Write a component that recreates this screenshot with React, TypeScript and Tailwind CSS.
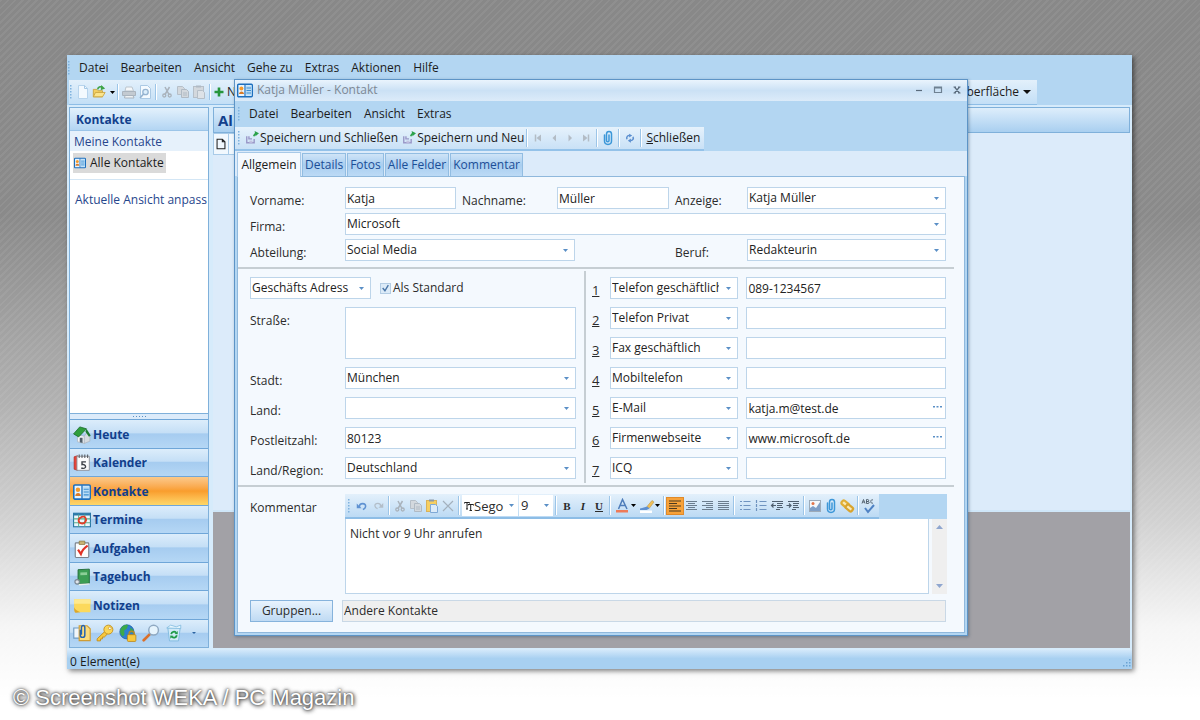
import React from "react";

type Kids = { children?: React.ReactNode };

function Icon({ children, className = "size-4" }: Kids & { className?: string }) {
  return (
    <svg viewBox="0 0 16 16" className={`${className} shrink-0`} fill="none" aria-hidden="true">
      {children}
    </svg>
  );
}

function Grip() {
  return (
    <svg viewBox="0 0 4 16" className="h-4 w-1 shrink-0" aria-hidden="true">
      {[1, 4, 7, 10, 13].map((y) => (
        <rect key={y} x="1" y={y} width="1.500" height="1.500" fill="#7fb2de" />
      ))}
    </svg>
  );
}

function Sep() {
  return (
    <span className="flex w-1.5 shrink-0 justify-center self-stretch py-0.5">
      <span className="w-px bg-[#9cc5e8]" />
      <span className="w-px bg-white" />
    </span>
  );
}

function Tool({ label, children, active = false, wide = false }: Kids & { label: string; active?: boolean; wide?: boolean }) {
  return (
    <button
      type="button"
      aria-label={label}
      className={`flex h-4 shrink-0 items-center justify-center ${wide ? "w-6" : "w-4"} ${
        active ? "bg-[#f7a23a] outline outline-[#e08a2a]" : ""
      }`}
    >
      {children}
    </button>
  );
}

const Caret = ({ className = "h-[3px] w-[5px] text-black" }: { className?: string }) => (
  <svg viewBox="0 0 6 4" preserveAspectRatio="none" className={`shrink-0 ${className}`} aria-hidden="true">
    <path d="M0 0h6L3 4z" fill="currentColor" />
  </svg>
);

const fieldCaret = "h-[3px] w-[5px] text-[#5a8fc6]";

const CardIcon = ({ className }: { className?: string }) => (
  <Icon className={className}>
    <rect x=".7" y="1.7" width="14.6" height="12.6" rx="1" fill="#e8f5ff" stroke="#1c6fbe" strokeWidth="1.4" />
    <path d="M8 2v12" stroke="#1c6fbe" strokeWidth="1.2" />
    <rect x="9" y="3" width="5.5" height="10" fill="#b8dcf6" />
    <path d="M9.5 5.5h4.500M9.500 8h4.500M9.500 10.500h4.500" stroke="#3f8fd0" />
    <circle cx="4.400" cy="6" r="2" fill="#f49a2c" />
    <path d="M2 11.500c0-3.500 5-3.500 5 0z" fill="#d97b28" />
  </Icon>
);

const CutIcon = () => (
  <Icon>
    <path d="M6 3l4 7.500M10.500 3L6 10.500" stroke="#a9b2bb" strokeWidth="1.500" />
    <circle cx="5.300" cy="11.500" r="1.500" stroke="#a9b2bb" strokeWidth="1.300" />
    <circle cx="10.700" cy="11.500" r="1.500" stroke="#a9b2bb" strokeWidth="1.300" />
  </Icon>
);

const CopyIcon = () => (
  <Icon>
    <path d="M2.500 2.500h5l2 2v6h-7z" fill="#d3d8dd" stroke="#b6bfc8" />
    <path d="M6.500 5.500h5l2 2v6h-7z" fill="#d3d8dd" stroke="#b0bac4" />
    <path d="M8 9h4M8 11h4" stroke="#b0bac4" />
  </Icon>
);

const PasteIcon = ({ color = false }: { color?: boolean }) => (
  <Icon>
    <rect x="2.500" y="2.500" width="10" height="11" fill={color ? "#f6cf62" : "#d3d8dd"} stroke={color ? "#d9b25a" : "#b6bfc8"} />
    <path d="M5 1.500h5v2H5z" fill={color ? "#8d99a6" : "#b0bac4"} />
    <path d="M6.500 6.500h5l2 2v6h-7z" fill={color ? "#dcebf9" : "#dde2e7"} stroke={color ? "#7fa9d6" : "#b6bfc8"} />
  </Icon>
);

const SaveIcon = () => (
  <Icon className="h-4 w-[14px]">
    <path d="M2 6v7.500h8.500V9M4.500 6v3h3.500" stroke="#9a98c8" strokeWidth="1.600" />
    <path d="M5 11h3.500v2.500H5z" fill="#c3c2e0" />
    <path d="M10 6c.5-2 1.500-2.800 2.500-3" stroke="#2aa24a" strokeWidth="1.800" />
    <path d="M11 0l5 2.600L12 6z" fill="#2aa24a" />
  </Icon>
);

const ClipIcon = () => (
  <Icon>
    <path
      d="M4.500 5v6c0 4.500 7 4.500 7 0V4c0-3.500-5-3.500-5 0v6.500c0 1.800 2.500 1.800 2.500 0V5"
      stroke="#3c97d8"
      strokeWidth="1.500"
      strokeLinecap="round"
    />
  </Icon>
);

const DocIcon = () => (
  <Icon>
    <path d="M3.500 1.500h6l3 3v10h-9z" fill="#f3f9fe" stroke="#b7d4ed" />
    <path d="M9.500 1.500v3h3" stroke="#a4c8e6" />
  </Icon>
);

const FolderIcon = () => (
  <Icon className="size-3.5">
    <path d="M1.500 5h4l1.500 1.500h5v7H1.500z" fill="#f3cf62" stroke="#c9a340" />
    <path d="M1.500 13.500L4 8.500h11l-3 5z" fill="#fbe48c" stroke="#c9a340" />
    <path d="M6.500 5c.5-3 3-3.500 5-2.500" stroke="#3fa447" strokeWidth="1.800" />
    <path d="M10.500 0l4.500 4-5 2z" fill="#3fa447" />
  </Icon>
);

const PrintIcon = () => (
  <Icon>
    <path d="M4 7l1-4h6l1.500 4z" fill="#f5f7f9" stroke="#bcc5cd" />
    <path d="M1.500 7.500h13v4h-13z" fill="#c3cad1" stroke="#aab4be" />
    <path d="M4 11.500h8l1 2.500H3.500z" fill="#eef1f3" stroke="#aab4be" />
  </Icon>
);

const PreviewIcon = () => (
  <Icon>
    <path d="M3.500 1.500h7l3 3v10h-10z" fill="#f4faff" stroke="#abc9e4" />
    <circle cx="8.500" cy="8" r="2.700" fill="#dceefb" stroke="#95b3d0" strokeWidth="1.300" />
    <path d="M6.500 10L3 14" stroke="#95b3d0" strokeWidth="1.600" />
  </Icon>
);

const HouseIcon = () => (
  <Icon className="size-[18px]">
    <path d="M4 8v6l6 1.500V9z" fill="#f4f6f8" stroke="#a9b2ba" strokeWidth=".6" />
    <path d="M10 9l3-4 2 3.500v5L10 15.500z" fill="#d5dbe0" stroke="#a9b2ba" strokeWidth=".6" />
    <path d="M.5 7L6 .8l6 1.700-7 7.200z" fill="#2f9e3c" stroke="#17692a" strokeWidth=".7" />
    <path d="M12 2.500l3.700 6-1.500 1L11 5z" fill="#1d7a30" />
    <path d="M6 10.500h2.500v4.600L6 14.500z" fill="#51606c" />
  </Icon>
);

const CalendarIcon = () => (
  <Icon className="size-[18px]">
    <path d="M1 2.500l3-1v13l-3-1z" fill="#e8443a" stroke="#a82820" strokeWidth=".6" />
    <path d="M3.500 2h11v12.500h-11z" fill="#fbfbfc" stroke="#8b8f96" strokeWidth=".8" />
    <path d="M5.500.5v3M8 .5v3M10.500.5v3M13 .5v3" stroke="#52565c" strokeWidth=".9" />
    <path d="M11.500 7H8v2.500c3.500-1 4.500 3.300 1 3.300-.8 0-1.200-.2-1.600-.6" stroke="#3b3f46" strokeWidth="1.200" />
  </Icon>
);

const TermineIcon = () => (
  <Icon className="size-[18px]">
    <rect x=".5" y="2" width="15" height="12" fill="#eaf6fb" stroke="#2a78a8" />
    <path d="M.5 3h15" stroke="#2a78a8" strokeWidth="2" />
    <path d="M.5 7h15M.5 10.500h15M5 3v11M10.500 3v11" stroke="#5cae8b" strokeWidth=".9" />
    <path d="M7 5.500c4-1.500 5.500 1.500 4 4-1.500 2.500-6 2-6-1 0-1.500 1-2.500 2.500-2.800" stroke="#e23c28" strokeWidth="1.600" />
  </Icon>
);

const TaskIcon = () => (
  <Icon className="size-[18px]">
    <rect x="2" y="2.500" width="12" height="13" rx=".8" fill="#fbfcfd" stroke="#7a828c" />
    <path d="M5.500 1h5v3h-5z" fill="#c8b372" stroke="#877338" strokeWidth=".6" />
    <path d="M4.500 8.500L7 12.500c1-3 3-5.500 6-7.500" stroke="#e03226" strokeWidth="1.900" />
  </Icon>
);

const DiaryIcon = () => (
  <Icon className="size-[18px]">
    <path d="M4.500 1.500L14.500 1v12.500l-10 .8z" fill="#3c9e54" stroke="#1d6833" strokeWidth=".8" />
    <path d="M6.500 4l6-.3v2.500l-6 .3z" fill="#8ccf97" />
    <path d="M4.500 14.300l10-.8v1.200l-9 .9z" fill="#e9efe9" />
    <circle cx="3.700" cy="12.300" r="2" fill="#dfe5ea" stroke="#7c8894" />
  </Icon>
);

const NoteIcon = () => (
  <Icon className="size-[18px]">
    <path d="M1 2h14.500v11.500H5.500C3.500 12.500 1.500 12 1 9z" fill="#fcd95c" />
    <path d="M1 2h14.500v4H1z" fill="#fee98f" />
    <path d="M1 9c1 2.500 3 3 5.500 4.500L3 14c-2 0-2-2.500-2-5z" fill="#dda82a" />
  </Icon>
);

const footIcons: { label: string; art: React.ReactNode }[] = [
  {
    label: "Ordner",
    art: (
      <>
        <path d="M.7 3.500h7v9h-7z" fill="#f0f6fb" stroke="#6d9ac3" />
        <path d="M5.500 1.500h7l2.800 2.800v10.500H5.500z" fill="#fbdc7c" stroke="#cf9d35" />
        <path d="M6.500 5v5c0 2.500 4 2.500 4 0V3c0-2.200-3-2.200-3 0v6.500" stroke="#2563b0" strokeWidth="1.300" />
      </>
    ),
  },
  {
    label: "Passwörter",
    art: (
      <>
        <path d="M8.500 6L1 13.200V15h3v-1.700h1.700v-1.700h1.700L10 9z" fill="#f7c83f" stroke="#c18d1d" strokeWidth=".8" />
        <circle cx="11" cy="5" r="4" fill="#fbd655" stroke="#c18d1d" strokeWidth=".8" />
        <circle cx="12.300" cy="3.800" r="1.200" fill="#fff" stroke="#c18d1d" strokeWidth=".6" />
      </>
    ),
  },
  {
    label: "Web",
    art: (
      <>
        <circle cx="7" cy="7" r="6.300" fill="#2d7fd0" stroke="#1b5a9e" strokeWidth=".6" />
        <path d="M2 3.500c2-3 5-3 6-2.500L7 4 4.500 6 5 9l-1.500 2C.5 9 .5 5.500 2 3.500zM10 3l3 2.500V8l-3-1z" fill="#3ba94a" />
        <path d="M9 10V8.500c0-2.800 4.500-2.800 4.500 0V10" stroke="#b3872a" strokeWidth="1.300" />
        <rect x="7.500" y="9.500" width="7.500" height="6" rx=".8" fill="#f8c93e" stroke="#b98416" strokeWidth=".7" />
      </>
    ),
  },
  {
    label: "Suchen",
    art: (
      <>
        <path d="M7 9l-5.500 5.500" stroke="#d9702c" strokeWidth="2.400" strokeLinecap="round" />
        <circle cx="10.300" cy="5.500" r="4.300" fill="#e6f4fd" stroke="#8fa9c2" strokeWidth="1.300" />
      </>
    ),
  },
  {
    label: "Papierkorb",
    art: (
      <>
        <path d="M2.500 3.500h11L12 15H4z" fill="#cfe9f8" stroke="#7db9de" strokeWidth=".8" />
        <path d="M1.500 3.500L5 1l5 1.500L14 1v3z" fill="#e9f7fe" stroke="#7db9de" strokeWidth=".7" />
        <path d="M5.500 9c.5-2.300 3-2.800 4.300-1.300M10.500 10c-.5 2.300-3 2.800-4.300 1.300" stroke="#1f9a48" strokeWidth="1.600" />
        <path d="M8.500 8.800l2.800.3V6.300zM7.500 10.500l-2.800-.3V13z" fill="#1f9a48" />
      </>
    ),
  },
];

const navItems = [
  { name: "Heute", icon: <HouseIcon /> },
  { name: "Kalender", icon: <CalendarIcon /> },
  { name: "Kontakte", icon: <CardIcon className="size-[18px]" />, active: true },
  { name: "Termine", icon: <TermineIcon /> },
  { name: "Aufgaben", icon: <TaskIcon /> },
  { name: "Tagebuch", icon: <DiaryIcon /> },
  { name: "Notizen", icon: <NoteIcon /> },
];

const fieldBox = "h-[22px] w-full min-w-0 rounded-none border border-[#bdd5ea] bg-white text-[#222]";

function TextField({ id, label, value = "" }: { id: string; label?: string; value?: string }) {
  return <input id={id} aria-label={label} defaultValue={value} className={`${fieldBox} px-px`} />;
}

function Choice({ id, label, value, className = "" }: { id: string; label?: string; value: string; className?: string }) {
  return (
    <div className={`relative min-w-0 ${className}`}>
      <select id={id} aria-label={label} defaultValue={value} className={`${fieldBox} block appearance-none pr-[18px] pl-px`}>
        <option>{value}</option>
      </select>
      <span className="pointer-events-none absolute top-[10px] right-[7px]">
        <Caret className={fieldCaret} />
      </span>
    </div>
  );
}

function Label({ htmlFor, children }: Kids & { htmlFor: string }) {
  return (
    <label htmlFor={htmlFor} className="block h-[22px] pt-[3px] leading-[22px] whitespace-nowrap">
      {children}
    </label>
  );
}

const phones = [
  { kind: "Telefon geschäftlich", value: "089-1234567" },
  { kind: "Telefon Privat", value: "" },
  { kind: "Fax geschäftlich", value: "" },
  { kind: "Mobiltelefon", value: "" },
  { kind: "E-Mail", value: "katja.m@test.de", more: true },
  { kind: "Firmenwebseite", value: "www.microsoft.de", more: true },
  { kind: "ICQ", value: "" },
];

const lines = (d: string, color = "#6b7c8d") => (
  <Icon>
    <path d={d} stroke={color} strokeWidth="1.200" />
  </Icon>
);

function EditorToolbar() {
  return (
    <div className="flex h-[25px] bg-[#b3d6f2]">
      <div className="flex items-center border-b-2 border-[#8dbde6] bg-linear-to-b from-[#e3f0fb] to-[#bcdaf4] pr-0.5 pl-0.5">
        <Grip />
        <span className="w-[3px]" />
        <Tool label="Rückgängig">
          <Icon className="size-3.5">
            <path d="M5 9c0-5 8-5 7 0-.3 1.500-1.500 2.500-3 3" stroke="#5f92d2" strokeWidth="1.800" />
            <path d="M2 5v5.500h5.500z" fill="#5f92d2" />
          </Icon>
        </Tool>
        <Tool label="Wiederholen">
          <Icon className="size-3.5">
            <path d="M11 8c0-4-7-4-6.500 0 .2 1.500 1.500 2.500 3 3" stroke="#b3bec9" strokeWidth="1.500" />
            <path d="M14 4.500V10H8.500z" fill="#b3bec9" />
          </Icon>
        </Tool>
        <Sep />
        <Tool label="Ausschneiden"><CutIcon /></Tool>
        <Tool label="Kopieren"><CopyIcon /></Tool>
        <Tool label="Einfügen"><PasteIcon color /></Tool>
        <Tool label="Löschen">{lines("M3 3l10 10M13 3L3 13", "#a3b0bd")}</Tool>
        <Sep />
        <div className="relative flex h-[21px] w-14 items-center bg-white">
          <svg viewBox="0 0 10 10" className="ml-0.5 size-2.5 shrink-0" aria-hidden="true">
            <path d="M.5 2.500v-1h5v1M3 1.500V8M2 8h2M4 4.500V3.500h5.500v1M6.700 3.500V9.500M5.500 9.500H8" stroke="#222" fill="none" />
          </svg>
          <select aria-label="Schriftart" className="w-full min-w-0 appearance-none rounded-none pr-3 text-[13px]">
            <option>Sego</option>
          </select>
          <span className="pointer-events-none absolute top-[9px] right-1"><Caret className={fieldCaret} /></span>
        </div>
        <div className="relative ml-px h-[21px] w-[34px] bg-white">
          <select aria-label="Schriftgröße" className="w-full appearance-none rounded-none pl-0.5 text-[13px]">
            <option>9</option>
          </select>
          <span className="pointer-events-none absolute top-[9px] right-1"><Caret className={fieldCaret} /></span>
        </div>
        <Sep />
        <Tool label="Fett"><b className="font-['Liberation_Serif',serif] text-[11px]">B</b></Tool>
        <Tool label="Kursiv"><i className="font-['Liberation_Serif',serif] text-[11px] font-bold">I</i></Tool>
        <Tool label="Unterstrichen"><u className="font-['Liberation_Serif',serif] text-[11px] font-bold">U</u></Tool>
        <Sep />
        <Tool label="Schriftfarbe" wide>
          <Icon>
            <path d="M3.500 11L7.500 1.500 12 11M5 7.500h5.500" stroke="#4f7dba" strokeWidth="1.500" />
            <rect x="1" y="12" width="12" height="2.500" fill="#ee7a58" />
          </Icon>
          <Caret />
        </Tool>
        <Tool label="Hervorheben" wide>
          <Icon>
            <path d="M8 8.500l5-6 2 1.500-4.500 6z" fill="#f0bf55" stroke="#b99552" strokeWidth=".6" />
            <path d="M1 10.500c3-1 5-1 7-2l2.500 2-3 1.500H1z" fill="#5d8fd0" />
            <rect x="1" y="12.500" width="12" height="2.500" fill="#fff" />
          </Icon>
          <Caret />
        </Tool>
        <Sep />
        <Tool label="Linksbündig" active>{lines("M2 3h12M2 5.500h8M2 8h12M2 10.500h8M2 13h12", "#4b3a20")}</Tool>
        <Tool label="Zentriert">{lines("M3 3.500h11M5 5.500h7M3 7.500h11M5 9.500h7M3 11.500h11")}</Tool>
        <Tool label="Rechtsbündig">{lines("M3 3.500h11M7 5.500h7M3 7.500h11M7 9.500h7M3 11.500h11")}</Tool>
        <Tool label="Blocksatz">{lines("M3 3.500h11M3 5.500h11M3 7.500h11M3 9.500h11M3 11.500h11")}</Tool>
        <Sep />
        <Tool label="Aufzählung">{lines("M3 3.500h2M6.500 3.500h7M3 7.500h2M6.500 7.500h7M3 11.500h2M6.500 11.500h7", "#6f93bf")}</Tool>
        <Tool label="Nummerierung">{lines("M3.500 2v3M6.500 3.500h7M3.500 6v3M6.500 7.500h7M3.500 10v3M6.500 11.500h7", "#6f93bf")}</Tool>
        <Tool label="Einzug verkleinern">{lines("M3 3.500h11M8 5.500h6M8 7.500h5M8 9.500h6M7 11.500h4M7 7.500H2M4.500 5.500L2.500 7.500l2 2", "#4f5f70")}</Tool>
        <Tool label="Einzug vergrößern">{lines("M3 3.500h11M8 5.500h6M8 7.500h5M8 9.500h6M7 11.500h4M1.500 7.500h5M4 5.500l2 2-2 2", "#4f5f70")}</Tool>
        <Sep />
        <Tool label="Bild">
          <Icon>
            <rect x="2.500" y="2.500" width="11" height="11" fill="#f5f9fc" stroke="#9daab8" />
            <path d="M3 13V10l3-2 3 2 4-6v9z" fill="#7f9fc6" />
            <circle cx="6" cy="5.500" r="1.500" fill="#e3744a" />
          </Icon>
        </Tool>
        <Tool label="Anlage"><ClipIcon /></Tool>
        <Tool label="Verknüpfung">
          <Icon>
            <rect x="2" y="3" width="7.500" height="4.500" rx="1.500" transform="rotate(40 5 6)" stroke="#e0ae36" strokeWidth="2.200" fill="#fae9b4" />
            <rect x="6.500" y="7.500" width="7.500" height="4.500" rx="1.500" transform="rotate(40 10 10)" stroke="#d9a42e" strokeWidth="2.200" fill="#fae9b4" />
          </Icon>
        </Tool>
        <Sep />
        <Tool label="Rechtschreibung">
          <Icon>
            <path d="M1 5.500L2.500 1.500 4 5.500M1.500 4h2M5.500 1.500v4h1.500c1.500 0 1.500-2 0-2H5.500h1.300c1.200 0 1.200-2 0-2zM12 2c-3-1.500-3 4.500 0 3" stroke="#4c5a68" strokeWidth=".9" />
            <path d="M4 10l3 4 6-7" stroke="#4f82c4" strokeWidth="2" />
          </Icon>
        </Tool>
      </div>
    </div>
  );
}

const tabs = ["Details", "Fotos", "Alle Felder", "Kommentar"];

function ContactDialog() {
  return (
    <section
      aria-label="Katja Müller - Kontakt"
      className="absolute top-[24px] right-[164px] left-[167px] flex flex-col border border-[#5d94c6] bg-[#b3d6f2] shadow-[1px_1px_3px_rgba(30,60,90,0.4)]"
    >
      <header className="flex h-[21px] items-center gap-1 bg-linear-to-b from-[#eaf4fd] via-[#cbe1f5] to-[#dcebf9] pr-0.5 pl-0.5">
        <CardIcon className="h-[17px] w-4" />
        <h1 className="flex-1 pb-0.5 text-[#7d8894]">Katja Müller - Kontakt</h1>
        <div className="flex gap-[3px] pb-0.5">
          <Tool label="Minimieren">{lines("M5 8.500h6", "#5a6b7c")}</Tool>
          <Tool label="Maximieren">{lines("M4.500 5h7M4.500 6h7M4.500 4.500v6h7v-6", "#6f8192")}</Tool>
          <Tool label="Fenster schließen">{lines("M5.500 5l5 6M10.500 5l-5 6M4.500 5h2.500M9 5h2.500M4.500 11h2.500M9 11h2.500", "#5a6b7c")}</Tool>
        </div>
      </header>

      <nav aria-label="Kontaktmenü" className="flex h-[26px] items-center gap-3 pl-0.5">
        <span className="-mr-1"><Grip /></span>
        {["Datei", "Bearbeiten", "Ansicht", "Extras"].map((m) => (
          <button key={m} type="button">{m}</button>
        ))}
      </nav>

      <div className="flex h-6">
        <div className="flex items-center border-b-2 border-[#94c2e9] bg-linear-to-b from-[#e6f2fc] to-[#c9e1f6] pr-1 pl-0.5 whitespace-nowrap">
          <Grip />
          <button type="button" className="ml-1 flex items-center gap-px"><SaveIcon />Speichern und Schließen</button>
          <button type="button" className="ml-1 flex items-center gap-px"><SaveIcon />Speichern und Neu</button>
          <Sep />
          <Tool label="Erster">
            <Icon><path d="M5.500 4.500v7" stroke="#b3bcc5" strokeWidth="1.500" /><path d="M11 4.500v7L6.500 8z" fill="#b3bcc5" /></Icon>
          </Tool>
          <Tool label="Vorheriger"><Icon><path d="M10 4.500v7L6.500 8z" fill="#b3bcc5" /></Icon></Tool>
          <Tool label="Nächster"><Icon><path d="M6.500 4.500v7L10 8z" fill="#b3bcc5" /></Icon></Tool>
          <Tool label="Letzter">
            <Icon><path d="M10.500 4.500v7" stroke="#b3bcc5" strokeWidth="1.500" /><path d="M5 4.500v7L9.500 8z" fill="#b3bcc5" /></Icon>
          </Tool>
          <Sep />
          <Tool label="Anlage"><ClipIcon /></Tool>
          <Sep />
          <Tool label="Aktualisieren">
            <Icon className="size-3.5">
              <path d="M4.500 9.500c-1-3 1-4.500 3-4.500M11.500 6.500c1 3-1 4.500-3 4.500" stroke="#5a8ecf" strokeWidth="1.700" />
              <path d="M7 3l3.500 2L7 7.500zM9 8.500v5L5.500 11z" fill="#5a8ecf" />
            </Icon>
          </Tool>
          <Sep />
          <button type="button" className="ml-0.5"><u>S</u>chließen</button>
        </div>
      </div>

      <div role="tablist" className="flex h-[25px] items-end bg-[#dcebfa] pl-0.5">
        <button type="button" role="tab" aria-selected="true" className="z-10 -mb-px h-[25px] w-16 border border-b-0 border-[#a7c9e8] bg-[#f4f9fe]">
          Allgemein
        </button>
        {tabs.map((t) => (
          <button
            key={t}
            type="button"
            role="tab"
            aria-selected="false"
            className="ml-px h-[23px] border border-b-0 border-[#92bde2] bg-linear-to-b from-[#cfe4f7] via-[#a9cef0] to-[#bcdaf5] px-0.5 text-[#1c4e97]"
          >
            {t}
          </button>
        ))}
      </div>

      <form className="mx-0.5 mb-0.5 border border-[#8fb8dc] bg-[#f4f9fe] pt-2.5 pb-2.5 text-[#2b2b2b]" onSubmit={(e) => e.preventDefault()}>
        <div className="mr-[18px] ml-3 grid grid-cols-[95px_111fr_101px_112fr_78px_199fr] gap-y-1">
          <Label htmlFor="vorname">Vorname:</Label>
          <TextField id="vorname" value="Katja" />
          <div className="pl-1.5"><Label htmlFor="nachname">Nachname:</Label></div>
          <TextField id="nachname" value="Müller" />
          <div className="pl-1.5"><Label htmlFor="anzeige">Anzeige:</Label></div>
          <Choice id="anzeige" value="Katja Müller" />
          <Label htmlFor="firma">Firma:</Label>
          <Choice id="firma" value="Microsoft" className="col-span-5" />
          <Label htmlFor="abteilung">Abteilung:</Label>
          <div className="col-span-3"><Choice id="abteilung" value="Social Media" className="w-[71%]" /></div>
          <div className="pl-1.5"><Label htmlFor="beruf">Beruf:</Label></div>
          <Choice id="beruf" value="Redakteurin" />
        </div>

        <hr className="mt-1.5 mr-2.5 border-t-2 border-[#c6ced3]" />

        <div className="mt-0.5 mr-[18px] ml-3 flex">
          <div className="grid min-w-0 flex-[326] auto-rows-[22px] grid-cols-[95px_1fr] gap-y-2 pt-1.5 pb-1">
            <div className="col-span-2 flex items-center">
              <Choice id="adressart" label="Adressart" value="Geschäfts Adress" className="w-[121px]" />
              <label className="ml-2.5 flex items-center gap-[3px]">
                <input type="checkbox" defaultChecked className="peer sr-only" />
                <Icon className="size-[9px] bg-[#dcebf8] outline outline-[#b4cde4]">
                  <path d="M3 7l4 5 6-10" stroke="#4a76a8" strokeWidth="2.500" />
                </Icon>
                Als Standard
              </label>
            </div>
            <div className="row-span-2"><Label htmlFor="strasse">Straße:</Label></div>
            <textarea id="strasse" className="row-span-2 w-full resize-none border border-[#bdd5ea] bg-white" />
            <Label htmlFor="stadt">Stadt:</Label>
            <Choice id="stadt" value="München" />
            <Label htmlFor="land">Land:</Label>
            <Choice id="land" value="" />
            <Label htmlFor="plz">Postleitzahl:</Label>
            <TextField id="plz" value="80123" />
            <Label htmlFor="region">Land/Region:</Label>
            <Choice id="region" value="Deutschland" />
          </div>
          <div className="mr-1.5 ml-2 w-0.5 bg-[#c6ced3]" />
          <ul className="flex min-w-0 flex-[354] flex-col gap-2 pt-1.5">
            {phones.map((p, i) => (
              <li key={p.kind} className="grid h-[22px] grid-cols-[18px_128fr_207fr]">
                <label htmlFor={`nummer${i}`} className="block h-[22px] pt-0.5 text-[13px] leading-[22px] underline">{i + 1}</label>
                <Choice id={`art${i}`} label={`Art ${i + 1}`} value={p.kind} />
                <div className="relative ml-2">
                  <TextField id={`nummer${i}`} value={p.value} />
                  {p.more && (
                    <button type="button" aria-label="Öffnen" className="absolute top-[5px] right-1">
                      <svg viewBox="0 0 9 9" className="size-[9px]" aria-hidden="true">
                        <path d="M0 4h2v1.500H0zM3.500 4h2v1.500h-2zM7 4h2v1.500H7z" fill="#5a8fc6" />
                      </svg>
                    </button>
                  )}
                </div>
              </li>
            ))}
          </ul>
        </div>

        <hr className="mt-0.5 mr-2.5 border-t-2 border-[#c6ced3]" />

        <div className="mt-[7px] mr-[17px] ml-3 flex">
          <div className="w-[95px] shrink-0"><Label htmlFor="kommentar">Kommentar</Label></div>
          <div className="min-w-0 flex-1">
            <EditorToolbar />
            <div className="flex h-[75px]">
              <textarea
                id="kommentar"
                defaultValue="Nicht vor 9 Uhr anrufen"
                className="min-w-0 flex-1 resize-none border border-t-0 border-[#bdd5ea] bg-white px-1 pt-[5px]"
              />
              <div className="ml-[3px] flex w-[15px] flex-col items-center justify-between bg-[#efefef] py-1.5">
                <Caret className="h-1 w-[7px] rotate-180 text-[#8fa6cf]" />
                <Caret className="h-1 w-[7px] text-[#8fa6cf]" />
              </div>
            </div>
          </div>
        </div>

        <div className="mt-1.5 mr-[18px] ml-3 flex gap-[9px]">
          <button type="button" className="h-[22px] w-[83px] shrink-0 border border-[#86b3dc] bg-linear-to-b from-[#e8f3fd] via-[#d4e7f8] to-[#bfdaf3]">
            Gruppen...
          </button>
          <input aria-label="Gruppen" readOnly defaultValue="Andere Kontakte" className="h-[22px] min-w-0 flex-1 border border-[#c9d8e6] bg-[#efefef] pb-0.5 pl-px" />
        </div>
      </form>
    </section>
  );
}

export default function App() {
  return (
    <div className="relative flex min-h-screen flex-col bg-[linear-gradient(rgba(255,255,255,0)_0%,rgba(255,255,255,0.02)_30%,rgba(255,255,255,0.35)_56%,rgba(255,255,255,0.61)_72%,rgba(255,255,255,0.92)_87%,#fff_97%),repeating-linear-gradient(135deg,#8f8f8f_0_2px,#888_2px_5px)] pt-[55px] pr-[68px] pb-2 pl-[67px] font-['Open_Sans','Noto_Sans',sans-serif] text-xs leading-5 text-[#1c1c1c]">
      <main className="relative flex min-h-[614px] flex-1 flex-col bg-[#b3d6f2] shadow-[2px_2px_5px_rgba(0,0,0,0.5)]">
        <nav aria-label="Hauptmenü" className="flex h-[25px] items-center gap-3">
          <span className="-mr-1"><Grip /></span>
          {["Datei", "Bearbeiten", "Ansicht", "Gehe zu", "Extras", "Aktionen", "Hilfe"].map((m) => (
            <button key={m} type="button">{m}</button>
          ))}
        </nav>

        <div className="mr-[95px] ml-0.5 flex h-[25px] items-center justify-between border-b border-[#8dbde6] bg-linear-to-b from-[#e3f0fb] to-[#c3dff6]">
          <div className="flex items-center">
            <Grip />
            <span className="w-0.5" />
            <Tool label="Neu"><DocIcon /></Tool>
            <Tool label="Öffnen" wide><FolderIcon /><span className="w-1" /><Caret /></Tool>
            <Sep />
            <Tool label="Drucken"><PrintIcon /></Tool>
            <Tool label="Seitenansicht"><PreviewIcon /></Tool>
            <Sep />
            <Tool label="Ausschneiden"><CutIcon /></Tool>
            <Tool label="Kopieren"><CopyIcon /></Tool>
            <Tool label="Einfügen"><PasteIcon /></Tool>
            <Sep />
            <button type="button" className="flex items-center gap-0.5">
              <Icon className="size-3"><path d="M8 2v12M2 8h12" stroke="#27963c" strokeWidth="3.500" /></Icon>
              <span>Neu</span>
            </button>
          </div>
          <button type="button" className="flex items-center gap-1 pr-1.5">
            Oberfläche
            <Caret className="h-1 w-2 text-[#111]" />
          </button>
        </div>

        <div className="flex flex-1 gap-1 border-x-2 border-[#d6ebfb] bg-[#d6ebfb] pt-0.5 pb-0.5">
          <aside className="flex w-[140px] shrink-0 flex-col border border-[#7fb0da] bg-white">
            <h2 className="h-[22px] bg-linear-to-b from-[#e3f1fc] to-[#b3d5f3] pl-1.5 leading-6 font-bold text-[#123f8c]">Kontakte</h2>
            <p className="h-[21px] border-t border-[#9cc5e8] bg-[#e6f1fb] pl-1 leading-[21px] text-[#26468c]">Meine Kontakte</p>
            <div className="mt-0.5 flex pl-[3px]">
              <a href="#alle" className="flex items-center gap-1 bg-[#dadada] pr-0.5 pl-px">
                <CardIcon className="size-3" />
                Alle Kontakte
              </a>
            </div>
            <hr className="mt-1.5 border-[#d3e6f5]" />
            <a href="#ansicht" className="mt-2.5 pl-[5px] whitespace-nowrap text-[#26468c]">Aktuelle Ansicht anpass</a>
            <div className="flex-1" />
            <div className="flex h-1.5 items-center justify-center gap-0.5 border-t border-[#7fb0da] bg-[#dcebfa]">
              {[0, 1, 2, 3, 4].map((i) => <span key={i} className="size-px bg-[#5c90c4]" />)}
            </div>
            <nav aria-label="Bereiche" className="grid h-[228px] grid-rows-8">
              {navItems.map((n) => (
                <button
                  key={n.name}
                  type="button"
                  className={`flex items-center gap-0.5 border-t border-[#6fa6d8] pt-0.5 pl-[3px] font-bold text-[#123f8c] ${
                    n.active
                      ? "bg-linear-to-b from-[#fbc98a] via-[#f99d2c] via-50% to-[#fdd768]"
                      : "bg-[linear-gradient(#dcedfb_0%,#c5dff6_45%,#a6ccf0_50%,#b5d7f5_100%)]"
                  }`}
                >
                  {n.icon}
                  {n.name}
                </button>
              ))}
              <div className="flex items-center gap-[5px] border-t border-[#6fa6d8] bg-[linear-gradient(#dcedfb_0%,#c5dff6_45%,#a6ccf0_50%,#b5d7f5_100%)] pl-[3px]">
                {footIcons.map((f) => (
                  <button key={f.label} type="button" aria-label={f.label}>
                    <Icon className="size-[18px]">{f.art}</Icon>
                  </button>
                ))}
                <button type="button" aria-label="Mehr" className="ml-1"><Caret className="h-0.5 w-1 text-[#2c64a2]" /></button>
              </div>
            </nav>
          </aside>

          <section className="flex min-w-0 flex-1 flex-col bg-[#a2a1a6]">
            <h2 className="h-[26px] shrink-0 border border-[#7fb0da] bg-linear-to-b from-[#deeefb] to-[#a9cff0] pl-1 text-[15px] leading-6 font-bold text-[#123f8c]">Al</h2>
            <div className="min-h-[376px] flex-1 border-b-2 border-[#cfe6f8] bg-[#dcebfa]">
              <div className="flex h-[22px] w-9 items-center border border-[#a9cbe8] bg-[#f1f8fe]">
                <Icon className="size-3.5"><path d="M3.500 2.500h6l3 3v8h-9zM9.500 2.500v3h3" stroke="#222" strokeWidth="1.200" /></Icon>
                <span className="h-full w-px bg-[#a9cbe8]" />
              </div>
            </div>
            <div className="h-[136px] shrink-0" />
          </section>
        </div>

        <footer className="flex h-[19px] items-center justify-between bg-linear-to-b from-[#d3e8fa] via-[#a8d0f1] via-45% to-[#a8d0f1] pl-[3px]">
          <span className="pt-1">0 Element(e)</span>
          <svg viewBox="0 0 12 12" className="size-3 self-end" aria-hidden="true">
            <path d="M9 2h1.500v1.500H9zM6 5h1.500v1.500H6zM9 5h1.500v1.500H9zM3 8h1.500v1.500H3zM6 8h1.500v1.500H6zM9 8h1.500v1.500H9z" fill="#6ba3d4" />
          </svg>
        </footer>

        <ContactDialog />
      </main>

      <p className="mt-[15px] -ml-[54px] font-['Liberation_Sans',sans-serif] text-[22px] leading-7 whitespace-nowrap text-white [text-shadow:0_0_2px_#444,0_0_4px_#555,1px_1px_4px_#666]">
        © Screenshot WEKA / PC Magazin
      </p>
    </div>
  );
}
